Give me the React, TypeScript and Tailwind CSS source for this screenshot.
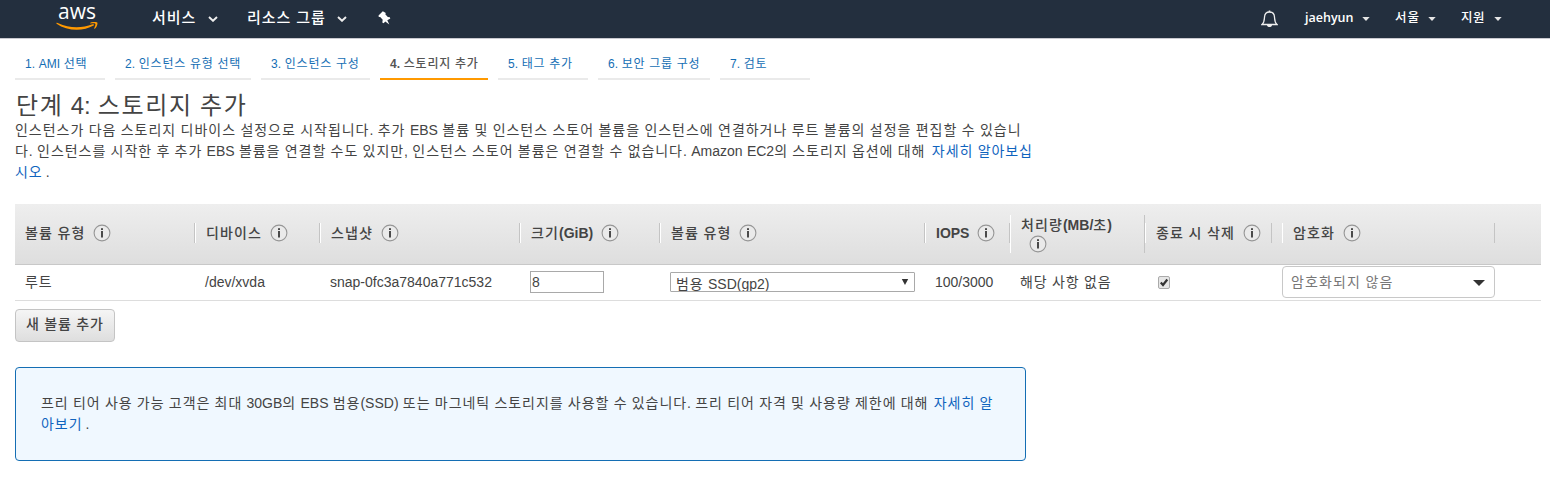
import type { ReactNode } from "react";

/** Spaces out Hangul a little while Latin letters, digits and punctuation keep their natural pitch. */
function Ko({ children, className = "tracking-[0.95px] [word-spacing:-0.5px]" }: { children: string; className?: string }) {
  return (
    <span className={className}>
      {children.split(/([!-~]+)/).map((part, i) => (i % 2 ? <span key={i} className="tracking-normal">{part}</span> : part))}
    </span>
  );
}

function Info() {
  return (
    <svg className="block h-[18px] w-[18px] shrink-0" viewBox="0 0 18 18">
      <circle cx="9" cy="9" r="7.900" fill="#eaeaea" stroke="#969696" strokeWidth="1.100" />
      <rect x="8" y="4.200" width="2" height="1.800" fill="#4a4a4a" />
      <rect x="8" y="7" width="2" height="6.500" fill="#4a4a4a" />
    </svg>
  );
}

function AwsLogo() {
  return (
    <div className="flex w-[42px] flex-col items-center">
      <span className="h-[22px] font-['Open_Sans'] text-[21px] leading-[23px] font-medium">aws</span>
      <svg className="block h-[9px] w-[42px]" viewBox="0 0 42 9">
        <path d="M0.300 1 C1 0.400 1.500 0.700 2.300 1.200 C13 6.300 26 6.300 36.500 2.300 C37.800 1.800 38.800 2.800 37.600 3.600 C27 9.800 11 9.200 0.600 1.800 Z" fill="#ff9900" />
        <path d="M34 0.900 C36 -0.400 40.500 -0.300 41.300 0.500 C41.900 1.800 40.800 5.200 38.800 6.700 C38.300 7 38 6.700 38.200 6.200 C39 4.200 39.800 2.300 39.300 1.700 C38.600 1.100 36.500 1.300 34.500 1.500 Z" fill="#ff9900" />
      </svg>
    </div>
  );
}

function Chevron() {
  return (
    <svg className="mt-[2px] block h-[6px] w-[10px]" viewBox="0 0 10 6">
      <path d="M1 1 L5 4.800 L9 1" fill="none" stroke="#eee" strokeWidth="1.900" />
    </svg>
  );
}

function Caret() {
  return (
    <svg className="block h-[4px] w-[8px]" viewBox="0 0 8 4">
      <path d="M0.300 0 H7.700 L4 4 Z" fill="#e5e5e5" />
    </svg>
  );
}

function Tab({ children, heading, className }: { children: string; heading?: ReactNode; className: string }) {
  return (
    <li className={`h-[32px] border-b-2 pl-[10px] text-[12px] leading-[32px] whitespace-nowrap ${className}`}>
      {heading}
      <Ko className="tracking-[0.85px] [word-spacing:-0.5px]">{children}</Ko>
    </li>
  );
}

function Head({ label, className }: { label: string; className: string }) {
  return (
    <div className={`flex h-5 shrink-0 items-center gap-[8px] whitespace-nowrap border-r border-r-[#c4c4c4] pl-[10px] ${className}`}>
      <Label text={label} />
      <Info />
    </div>
  );
}

function Label({ text }: { text: string }) {
  return (
    <span className="font-medium tracking-[1.1px] [word-spacing:-0.5px]">
      {text.split(/([!-~]+)/).map((part, i) => (i % 2 ? <b key={i} className="font-bold tracking-normal">{part}</b> : part))}
    </span>
  );
}

export default function App() {
  return (
    <div className="h-[484px] w-[1550px] overflow-hidden bg-white font-['Liberation_Sans','Noto_Sans_CJK_KR',sans-serif] text-[14px] text-[#444]">
      <header className="flex h-[39px] border-b border-[#c9c9cf] bg-[#232f3e] text-white">
        <div className="ml-[56px]"><AwsLogo /></div>
        <nav className="flex h-[35px] items-center font-['Open_Sans','Noto_Sans_CJK_KR',sans-serif] text-[15px] font-medium tracking-[1px]">
          <span className="ml-[54px] w-[56px] whitespace-nowrap">서비스</span>
          <Chevron />
          <span className="ml-[29px] w-[90px] whitespace-nowrap">리소스 그룹</span>
          <Chevron />
        </nav>
        <svg className="mt-[11px] ml-[31px] h-[14px] w-[13px]" viewBox="0 0 13 14">
          <path d="M4.800 0.300 L7.800 2 L7.300 3.200 L9.800 6 L11.800 6.200 L12.300 7.600 L9.300 9.300 L11.300 13.600 L7.300 10.400 L5.600 12.200 L4.300 11.600 L4.700 8.800 L2.200 6 L0.800 6 L0.500 4.600 Z" fill="#fff" />
        </svg>
        <div className="flex-1" />
        <svg className="mt-[10px] h-[18px] w-[17px]" viewBox="0 0 17 18">
          <path d="M1 14.500 C3.500 12.500 3.300 10 3.500 7 C3.700 3.800 5.700 2 8.500 2 C11.300 2 13.300 3.800 13.500 7 C13.700 10 13.500 12.500 16 14.500 Z" fill="none" stroke="#eee" strokeWidth="1.300" />
          <path d="M7.700 0.500 h1.600 v1.500 h-1.600 Z M6 15 H11 C11 17.800 6 17.800 6 15 Z" fill="#eee" />
        </svg>
        <nav className="flex h-[37px] w-[272px] items-center font-['Open_Sans','Noto_Sans_CJK_KR',sans-serif] text-[12.500px] font-semibold">
          <span className="ml-[27px] w-[57px]">jaehyun</span><Caret />
          <span className="ml-[25px] w-[33px] font-medium tracking-[0.9px] whitespace-nowrap">서울</span><Caret />
          <span className="ml-[25px] w-[33px] font-medium tracking-[0.6px] whitespace-nowrap">지원</span><Caret />
        </nav>
      </header>

      <main className="pl-[15px]">
        <ol className="flex gap-[10px] pt-[9px] text-[#146eb4]">
          <Tab className="w-[90px] border-[#eaeaea]">1. AMI 선택</Tab>
          <Tab className="w-[136px] border-[#eaeaea]">2. 인스턴스 유형 선택</Tab>
          <Tab className="w-[109px] border-[#eaeaea]">3. 인스턴스 구성</Tab>
          <Tab className="w-[108px] border-[#ff9900] font-medium text-[#555]" heading={<b>4.</b>}> 스토리지 추가</Tab>
          <Tab className="w-[90px] border-[#eaeaea]">5. 태그 추가</Tab>
          <Tab className="w-[112px] border-[#eaeaea]">6. 보안 그룹 구성</Tab>
          <Tab className="w-[90px] border-[#eaeaea]">7. 검토</Tab>
        </ol>

        <h1 className="mt-[12px] h-[28px] pl-[1px] text-[24px] leading-[28px] whitespace-nowrap">
          <Ko className="tracking-[1.7px] [word-spacing:-1.3px]">단계 4: 스토리지 추가</Ko>
        </h1>
        <div className="h-[84px] leading-[21px] whitespace-nowrap">
          <p><Ko className="tracking-[0.97px] [word-spacing:-0.45px]">인스턴스가 다음 스토리지 디바이스 설정으로 시작됩니다. 추가 EBS 볼륨 및 인스턴스 스토어 볼륨을 인스턴스에 연결하거나 루트 볼륨의 설정을 편집할 수 있습니</Ko></p>
          <p><Ko>다. 인스턴스를 시작한 후 추가 EBS 볼륨을 연결할 수도 있지만, 인스턴스 스토어 볼륨은 연결할 수 없습니다. Amazon EC2의 스토리지 옵션에 대해 </Ko><a className="ml-[2px] text-[#0f64be]"><Ko>자세히 알아보십</Ko></a></p>
          <p><a className="text-[#0f64be]"><Ko>시오</Ko></a><span className="ml-[3px]">.</span></p>
        </div>

        <section className="w-[1526px]">
          <div className="flex h-[61px] items-center border-b border-[#c8c8c8] bg-linear-to-b from-[#eeeeee] to-[#dedede] pb-[2px]">
            <Head label="볼륨 유형" className="w-[180px]" />
            <Head label="디바이스" className="w-[125px] border-l border-l-white" />
            <Head label="스냅샷" className="w-[200px] border-l border-l-white" />
            <Head label="크기(GiB)" className="w-[140px] border-l border-l-white" />
            <Head label="볼륨 유형" className="w-[265px] border-l border-l-white" />
            <Head label="IOPS" className="w-[85px] border-l border-l-white" />
            <div className="mt-[1px] flex h-[38px] w-[135px] shrink-0 flex-col border-r border-l border-r-[#c4c4c4] border-l-white pl-[10px]">
              <span className="h-5 leading-[20px] whitespace-nowrap"><Label text="처리량(MB/초)" /></span>
              <div className="pl-[8px]"><Info /></div>
            </div>
            <Head label="종료 시 삭제" className="w-[127px] border-l border-l-white" />
            <Head label="암호화" className="ml-[10px] w-[213px] border-l border-l-white" />
          </div>
          <div className="flex h-[36px] items-center border-b border-[#ddd] whitespace-nowrap">
            <div className="w-[180px] pl-[10px]"><Ko>루트</Ko></div>
            <div className="w-[125px] pl-[10px]">/dev/xvda</div>
            <div className="w-[195px] pl-[10px]">snap-0fc3a7840a771c532</div>
            <div className="w-[140px] pb-[2px] pl-[15px]"><div className="h-[22px] w-[74px] border border-[#a9a9a9] pl-[1px] leading-[21px]">8</div></div>
            <div className="w-[265px] pb-[1px] pl-[15px]">
              <div className="flex h-5 w-[245px] justify-between overflow-hidden rounded-[1px] border border-[#a9a9a9] pr-[5px] pl-[5px] leading-[22px]">
                <Ko>범용 SSD(gp2)</Ko>
                <svg className="mt-[6px] h-[6px] w-[8px]" viewBox="0 0 8 6"><path d="M0.800 0 H7.200 L4 6 Z" fill="#333" /></svg>
              </div>
            </div>
            <div className="w-[100px] pl-[15px]">100/3000</div>
            <div className="w-[138px]"><Ko>해당 사항 없음</Ko></div>
            <div className="w-[124px]">
              <svg className="block h-[13px] w-[12px]" viewBox="0 0 12 13"><rect x="0.500" y="0.500" width="11" height="12" rx="1.500" fill="#e6e6e6" stroke="#aaa" /><path d="M2.800 6.500 L5 9 L9.300 3.500" fill="none" stroke="#333" strokeWidth="2.200" /></svg>
            </div>
            <div className="mb-[2px] flex h-[32px] w-[213px] items-center justify-between rounded-[4px] border border-[#c8c8c8] pr-[9px] pl-[8px] leading-[22px] text-[#777]">
              <Ko className="pt-[1px] tracking-[1.1px] [word-spacing:-0.4px]">암호화되지 않음</Ko>
              <svg className="mt-[2px] h-[6px] w-[12px]" viewBox="0 0 12 6"><path d="M0 0 H12 L6 6 Z" fill="#333" /></svg>
            </div>
          </div>
        </section>

        <button className="mt-[8px] block h-[33px] w-[100px] rounded-[4px] border border-[#c4c4c4] bg-linear-to-b from-[#f5f5f5] to-[#dedede] pb-[2px] font-medium whitespace-nowrap"><Ko>새 볼륨 추가</Ko></button>

        <aside className="mt-[25px] h-[94px] w-[1011px] rounded-[4px] border border-[#146eb4] bg-[#f0f8ff] pt-[25px] pl-[25px] leading-[21px] whitespace-nowrap">
          <p><Ko className="tracking-[0.95px] [word-spacing:-0.55px]">프리 티어 사용 가능 고객은 최대 30GB의 EBS 범용(SSD) 또는 마그네틱 스토리지를 사용할 수 있습니다. 프리 티어 자격 및 사용량 제한에 대해 </Ko><a className="ml-[1px] text-[#0f64be]"><Ko>자세히 알</Ko></a></p>
          <p><a className="text-[#0f64be]"><Ko>아보기</Ko></a><span className="ml-[3px]">.</span></p>
        </aside>
      </main>
    </div>
  );
}
